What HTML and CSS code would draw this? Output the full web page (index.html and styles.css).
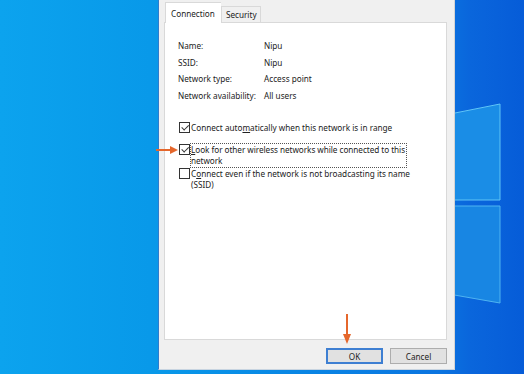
FILE: index.html
```html
<!DOCTYPE html>
<html lang="en">

<head>
    <meta charset="UTF-8">
    <meta name="viewport" content="width=device-width, initial-scale=1.0">
    <title>Wireless Network Properties</title>
    <link rel="stylesheet" href="styles.css">
</head>

<body>
    <div id="desktop">
        <!-- windows logo panes behind the dialog -->
        <svg id="logo" width="524" height="374" viewBox="0 0 524 374">
            <polygon points="380,128 500,104 500,200 380,200" fill="#1a8de6" stroke="#5ec4f7" stroke-width="1" />
            <polygon points="380,206 500,206 500,303 380,282" fill="#1886e3" stroke="#4fb4f2" stroke-width="1" />
        </svg>

        <div id="dialog">
            <ul class="tabs">
                <li class="active">Connection</li>
                <li>Security</li>
            </ul>
            <div class="panel">
                <div class="props">
                    <span>Name:</span><span>Nipu</span>
                    <span>SSID:</span><span>Nipu</span>
                    <span>Network type:</span><span>Access point</span>
                    <span>Network availability:</span><span>All users</span>
                </div>
                <div class="check first">
                    <i class="box on"></i>
                    <span>Connect auto<u>m</u>atically when this network is in range</span>
                </div>
                <div class="check second">
                    <i class="box on"></i>
                    <span class="focus"><u>L</u>ook for other wireless networks while connected to this network</span>
                </div>
                <div class="check third">
                    <i class="box"></i>
                    <span>C<u>o</u>nnect even if the network is not broadcasting its name (SSID)</span>
                </div>
            </div>
            <div class="buttons">
                <button class="btn default">OK</button>
                <button class="btn">Cancel</button>
            </div>
        </div>

        <!-- orange pointers -->
        <svg id="arrow-left" width="24" height="10" viewBox="0 0 24 10">
            <line x1="0" y1="5" x2="16" y2="5" stroke="#e5672c" stroke-width="2" />
            <polygon points="14,1 22,5 14,9" fill="#e5672c" />
        </svg>
        <svg id="arrow-down" width="10" height="32" viewBox="0 0 10 32">
            <line x1="5" y1="0" x2="5" y2="22" stroke="#e5672c" stroke-width="2" />
            <polygon points="1,20 5,30 9,20" fill="#e5672c" />
        </svg>
    </div>
</body>

</html>
```

FILE: styles.css
```css
* {
    margin: 0;
    padding: 0;
    list-style: none;
    box-sizing: border-box;
}
body {
    font-family: "Noto Sans", "Liberation Sans", sans-serif;
    font-size: 8.2px;
    color: #222;
}
#desktop {
    width: 524px;
    height: 374px;
    position: relative;
    overflow: hidden;
    background: linear-gradient(90deg, #0ca3ee 0, #0899e9 150px, #0a74e0 440px, #0a66dc 470px, #065cd8 524px);
}
#logo {
    position: absolute;
    left: 0;
    top: 0;
}
#dialog {
    position: absolute;
    left: 158px;
    top: -2px;
    width: 297px;
    height: 372px;
    background: #f0f0f0;
    border-left: 1px solid #2f7ccb;
    border-right: 1px solid #d4d4d4;
    border-bottom: 1px solid #c8d4e0;
    padding: 0 7px 0 5px;
    display: flex;
    flex-direction: column;
}
.tabs {
    display: flex;
    align-items: flex-end;
    height: 24px;
    padding-left: 1px;
    position: relative;
    z-index: 1;
}
.tabs li {
    height: 16px;
    line-height: 15px;
    padding: 0 3px 0 4px;
    border: 1px solid #d9d9d9;
    border-bottom: none;
    background: #f0f0f0;
}
.tabs li.active {
    height: 21px;
    line-height: 21px;
    padding: 0 6px 0 5px;
    background: #fff;
    margin-bottom: -1px;
    border-right: none;
}
.panel {
    height: 318px;
    background: #fff;
    border: 1px solid #d9d9d9;
    padding: 15px 0 0 13px;
}
.props {
    display: grid;
    grid-template-columns: 86px auto;
    line-height: 16.7px;
}
.check {
    display: flex;
    align-items: flex-start;
    line-height: 11.4px;
}
.check span {
    width: 222px;
}
.check .focus {
    width: 217px;
    letter-spacing: -0.05px;
}
.check.first {
    margin-top: 16.8px;
}
.check.second {
    margin-top: 11px;
}
.check.third {
    margin-top: 0;
}
.box {
    flex: none;
    width: 11px;
    height: 11px;
    border: 1px solid #333;
    margin: 0 1px 0 1px;
    position: relative;
}
.box.on::after {
    content: "";
    position: absolute;
    left: 1px;
    top: 1px;
    width: 6px;
    height: 3px;
    border-left: 1px solid #333;
    border-bottom: 1px solid #333;
    transform: rotate(-45deg) translate(0, 1px);
}
.focus {
    border: 1px dotted #555;
    margin: -1px 0 0 -1px;
}
.buttons {
    display: flex;
    justify-content: flex-end;
    gap: 7px;
    padding-top: 8px;
}
.btn {
    width: 57px;
    height: 16px;
    font-family: inherit;
    font-size: inherit;
    color: #222;
    background: #e1e1e1;
    border: 1px solid #adadad;
}
.btn.default {
    border: 2px solid #3e7fd2;
}
#arrow-left {
    position: absolute;
    left: 156px;
    top: 145px;
}
#arrow-down {
    position: absolute;
    left: 342px;
    top: 314px;
}
```
